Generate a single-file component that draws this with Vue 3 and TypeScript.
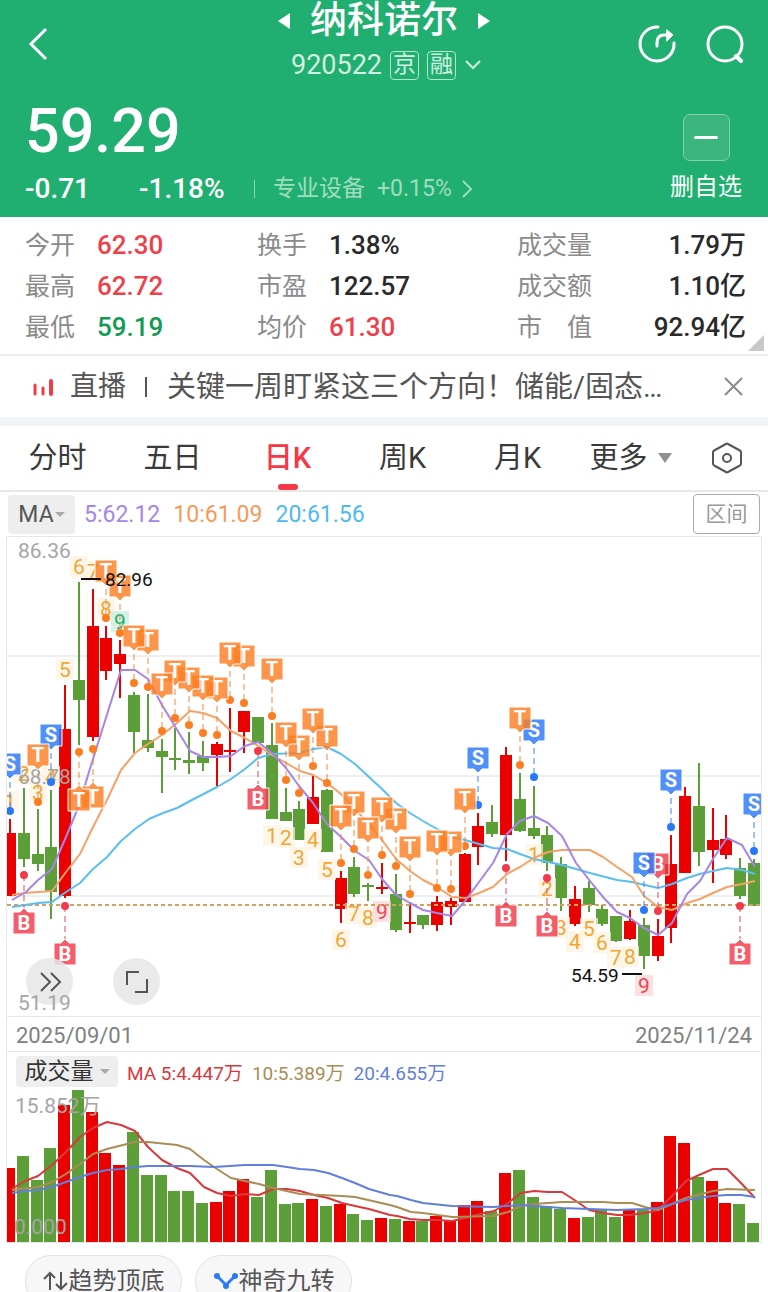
<script setup lang="ts">
type Kind = 'T' | 'S' | 'B'
interface Marker { kind: Kind; i: number; top: number; below?: boolean }

const xAt = (i: number): number => Math.round(10 + (744 * i) / 54)
const volX = (i: number): number => Math.round(9 + (744 * i) / 54)

// [rising, high, body top, body bottom, low]
const candles: [number, number, number, number, number][] = [
  [1, 819, 833, 896, 896], [0, 788, 833, 859, 867], [0, 809, 854, 864, 871], [0, 790, 847, 892, 919],
  [1, 685, 729, 896, 898], [0, 582, 680, 700, 745], [1, 589, 626, 737, 741], [1, 626, 638, 671, 680],
  [1, 640, 654, 664, 698], [0, 692, 695, 732, 753], [0, 694, 740, 748, 752], [0, 739, 751, 757, 793],
  [0, 728, 758, 760, 770], [0, 732, 760, 763, 774], [0, 741, 756, 763, 771], [1, 742, 744, 755, 786],
  [1, 708, 750, 752, 772], [1, 711, 711, 732, 753], [0, 717, 717, 743, 743], [0, 723, 745, 819, 819],
  [0, 788, 812, 821, 821], [0, 801, 809, 840, 840], [1, 775, 797, 824, 824], [0, 789, 790, 852, 852],
  [1, 871, 878, 909, 923], [0, 857, 867, 894, 897], [0, 883, 885, 887, 901], [1, 863, 887, 889, 894],
  [0, 874, 894, 930, 932], [1, 902, 922, 924, 933], [0, 915, 915, 925, 929], [1, 896, 902, 925, 931],
  [1, 898, 901, 907, 925], [1, 853, 854, 902, 902], [1, 813, 826, 847, 865], [0, 805, 822, 834, 837],
  [1, 747, 755, 835, 861], [0, 773, 799, 831, 832], [0, 786, 828, 836, 839], [0, 826, 835, 863, 871],
  [0, 857, 864, 898, 911], [1, 886, 899, 924, 926], [0, 881, 888, 905, 912], [0, 905, 909, 924, 926],
  [0, 916, 916, 941, 942], [1, 910, 921, 939, 940], [0, 918, 925, 956, 969], [1, 919, 936, 956, 961],
  [1, 835, 864, 928, 943], [1, 787, 796, 873, 873], [0, 763, 806, 852, 866], [1, 808, 840, 850, 883],
  [1, 815, 839, 855, 859], [0, 858, 868, 896, 899], [0, 859, 863, 906, 906],
]

const volumeTops: number[] = [
  1168, 1156, 1180, 1148, 1105, 1090, 1112, 1153, 1165, 1132, 1175, 1175, 1191, 1191, 1203, 1202, 1191, 1179,
  1197, 1170, 1204, 1203, 1199, 1206, 1204, 1214, 1220, 1218, 1219, 1221, 1221, 1216, 1221, 1205, 1201, 1211,
  1173, 1170, 1197, 1206, 1209, 1218, 1217, 1209, 1217, 1210, 1210, 1202, 1136, 1143, 1177, 1181, 1203, 1204, 1223,
]

const ma5 = '12,900 26,892 38,880 52,869 66,837 80,803 88,775 121,670 135,670 148,679 162,705 176,728 190,751 203,757 217,757 231,756 245,746 258,742 272,753 286,768 299,786 313,803 327,824 341,837 355,851 369,860 382,879 396,895 410,903 423,910 437,913 452,916 465,901 479,882 493,863 507,834 520,821 534,816 548,823 562,836 576,863 590,881 603,897 617,912 630,918 644,928 658,935 672,923 687,894 700,881 713,859 727,838 742,845 755,867'
const ma10 = '12,895 25,893 52,891 66,872 80,854 93,827 107,800 121,770 135,753 148,744 162,735 177,723 190,711 203,713 217,718 231,731 245,738 260,747 272,755 286,763 300,771 313,775 327,783 341,794 355,809 368,823 382,840 396,859 410,871 423,880 437,887 452,897 466,898 479,893 493,887 507,874 520,867 534,858 548,852 562,850 590,850 603,857 617,867 632,877 644,896 658,907 672,910 687,903 700,899 713,893 727,887 742,884 755,881'
const ma20 = '12,907 25,905 38,903 52,902 66,892 80,883 93,869 107,857 121,841 135,829 149,819 163,813 177,808 190,801 217,787 231,779 245,769 258,758 272,754 300,753 313,749 327,747 341,754 355,764 369,777 382,789 396,803 410,813 423,821 437,829 452,837 465,840 479,844 493,848 507,849 520,854 534,859 548,862 562,865 576,869 590,873 617,880 632,882 658,888 672,884 687,878 700,874 713,871 727,868 742,870 755,874'
const vol5 = '12,1189 25,1181 38,1176 52,1165 66,1152 80,1137 93,1128 107,1122 121,1125 135,1131 148,1147 162,1160 177,1168 190,1173 204,1187 217,1193 231,1196 245,1194 259,1195 273,1189 287,1189 300,1191 314,1195 328,1198 342,1203 355,1206 369,1209 390,1215 397,1216 410,1219 423,1220 438,1220 452,1221 465,1218 480,1214 494,1211 508,1203 521,1193 534,1191 548,1192 562,1192 576,1201 589,1210 603,1213 617,1215 630,1215 645,1213 658,1210 672,1196 686,1181 699,1175 713,1169 727,1169 741,1183 755,1198'
const vol10 = '12,1190 38,1187 52,1182 66,1174 80,1164 93,1154 107,1149 135,1142 148,1142 177,1145 190,1149 204,1160 217,1169 231,1178 259,1184 273,1188 300,1194 342,1196 355,1197 390,1205 397,1207 411,1212 423,1213 452,1217 493,1216 508,1212 521,1206 534,1204 562,1202 603,1202 617,1203 632,1203 645,1207 658,1210 672,1204 686,1198 713,1191 727,1189 755,1190'
const vol20 = '12,1193 25,1191 38,1190 52,1187 66,1182 80,1177 93,1173 107,1170 121,1169 135,1167 148,1166 190,1166 214,1167 245,1165 273,1165 287,1167 300,1169 314,1170 328,1173 342,1178 355,1183 369,1189 390,1195 397,1196 411,1200 423,1203 452,1206 493,1207 521,1205 562,1208 617,1210 645,1209 658,1208 672,1204 686,1200 713,1196 727,1195 741,1195 755,1197'

const above = (kind: Kind, pairs: [number, number][]): Marker[] => pairs.map(([i, top]) => ({ kind, i, top }))
const under = (kind: Kind, pairs: [number, number][]): Marker[] =>
  pairs.map(([i, top]) => ({ kind, i, top, below: true }))

// Later days are drawn first, so an earlier flag lies over its right-hand neighbour.
const markers: Marker[] = [
  ...above('T', [
    [2, 744], [7, 560], [8, 575], [9, 625], [10, 629], [11, 673], [12, 660], [13, 667], [14, 675], [15, 677],
    [16, 642], [17, 645], [19, 658], [20, 722], [21, 735], [22, 708], [23, 725], [24, 805], [25, 791], [26, 817],
    [27, 797], [28, 808], [29, 836], [31, 830], [32, 831], [33, 788], [37, 707],
  ]),
  ...above('S', [[0, 753], [3, 724], [34, 747], [38, 719], [46, 852], [48, 769], [54, 793]]),
  ...above('B', [[47, 853]]),
  ...under('T', [[5, 789], [6, 786]]),
  ...under('B', [[1, 912], [4, 943], [18, 788], [36, 905], [39, 915], [53, 943]]),
].sort((a, b) => b.i - a.i)

const dotY = (m: Marker): number => (m.below ? m.top - 37 : m.top + 58)
const flagPath = (m: Marker): string => {
  const x = xAt(m.i)
  const l = x - 11
  const r = x + 11
  const t = m.top
  const b = m.top + 22
  return m.below
    ? `M${l} ${t}H${x - 4}L${x} ${t - 4}L${x + 4} ${t}H${r}V${b}H${l}Z`
    : `M${l} ${t}H${r}V${b}H${x + 4}L${x} ${b + 4}L${x - 4} ${b}H${l}Z`
}

// [day index, digit, centre y]
const turns: [number, number, number][] = [
  [0, 1, 802], [1, 2, 774], [2, 3, 793], [3, 4, 777], [4, 5, 670], [5, 6, 567], [6, 7, 572], [7, 8, 609], [8, 9, 622],
  [19, 1, 836], [20, 2, 838], [21, 3, 858], [22, 4, 840], [23, 5, 870], [24, 6, 940], [25, 7, 914], [26, 8, 918],
  [27, 9, 912], [38, 1, 855], [39, 2, 889], [40, 3, 928], [41, 4, 942], [42, 5, 929], [43, 6, 943], [44, 7, 958],
  [45, 8, 957], [46, 9, 986],
]
const turnTone = (i: number, n: number): string => (n < 9 ? 'amber' : i === 8 ? 'mint' : 'rose')

const stats = [
  [['今开', '62.30', 'up'], ['最高', '62.72', 'up'], ['最低', '59.19', 'down']],
  [['换手', '1.38%', ''], ['市盈', '122.57', ''], ['均价', '61.30', 'up']],
  [['成交量', '1.79万', ''], ['成交额', '1.10亿', ''], ['市　值', '92.94亿', '']],
]
const tabs = ['分时', '五日', '日K', '周K', '月K']
</script>

<template>
  <main class="page">
    <header class="head">
      <nav class="nav">
        <button class="icon-btn" aria-label="返回">
          <svg width="28" height="40" viewBox="0 0 28 40"><path d="M23 5L8 20L23 35" fill="none" stroke="#fff" stroke-width="3" /></svg>
        </button>
        <div class="title">
          <div class="name-row">
            <button class="icon-btn" aria-label="上一只">
              <svg width="14" height="18" viewBox="0 0 14 18"><path d="M13 1V17L1 9Z" fill="#fff" /></svg>
            </button>
            <h1>纳科诺尔</h1>
            <button class="icon-btn" aria-label="下一只">
              <svg width="14" height="18" viewBox="0 0 14 18"><path d="M1 1V17L13 9Z" fill="#fff" /></svg>
            </button>
          </div>
          <button class="code-row">
            <span>920522</span><span class="badge">京</span><span class="badge">融</span>
            <svg width="18" height="12" viewBox="0 0 18 12"><path d="M2 2L9 9L16 2" fill="none" stroke="#d3f0e0" stroke-width="2" /></svg>
          </button>
        </div>
        <div class="actions">
          <button class="icon-btn" aria-label="分享">
            <svg width="40" height="40" viewBox="0 0 40 40" fill="none" stroke="#fff" stroke-width="3" stroke-linecap="round">
              <path d="M21 3A17 17 0 1 0 37 19" /><path d="M20 22V19Q20 11 27 11H31" /><path d="M30 6L36 11L30 17Z" fill="#fff" stroke-width="1" stroke-linejoin="round" />
            </svg>
          </button>
          <button class="icon-btn" aria-label="搜索">
            <svg width="40" height="40" viewBox="0 0 40 40" fill="none" stroke="#fff" stroke-width="3" stroke-linecap="round">
              <circle cx="20" cy="20" r="17" /><path d="M31 32L36 37" stroke-width="4" />
            </svg>
          </button>
        </div>
      </nav>
      <div class="quote">
        <div>
          <div class="price">59.29</div>
          <div class="change">
            <span class="diff">-0.71</span><span class="pct">-1.18%</span>
            <a href="#" class="sector">专业设备<span>+0.15%</span>
              <svg width="12" height="18" viewBox="0 0 12 18"><path d="M2 1L10 9L2 17" fill="none" stroke="currentColor" stroke-width="2" /></svg>
            </a>
          </div>
        </div>
        <button class="watch"><span class="minus"><i></i></span>删自选</button>
      </div>
    </header>

    <section class="stats">
      <dl v-for="(col, c) in stats" :key="c">
        <div v-for="[label, value, tone] in col" :key="label">
          <dt>{{ label }}</dt><dd :class="tone">{{ value }}</dd>
        </div>
      </dl>
      <svg class="corner" width="16" height="16" viewBox="0 0 16 16"><path d="M16 0V16H0Z" fill="#c8c8c8" /></svg>
    </section>

    <section class="ticker">
      <svg width="22" height="20" viewBox="0 0 22 20" stroke="#f03a46" stroke-linecap="round"><path d="M2 8V17M10 11V17" stroke-width="3" /><path d="M18 4V17" stroke-width="4" /></svg>
      <a href="#"><span>直播</span><i></i><span class="headline">关键一周盯紧这三个方向！储能/固态…</span></a>
      <button class="icon-btn" aria-label="关闭">
        <svg width="20" height="20" viewBox="0 0 20 20"><path d="M2 1L19 18M19 1L2 18" stroke="#8a8a8a" stroke-width="2" /></svg>
      </button>
    </section>

    <nav class="tabs">
      <button v-for="t in tabs" :key="t" :class="{ active: t === '日K' }">{{ t }}</button>
      <button class="more">更多<svg width="14" height="12" viewBox="0 0 14 12"><path d="M0 1H14L7 11Z" fill="#8f8f8f" /></svg></button>
      <button aria-label="设置">
        <svg width="32" height="32" viewBox="0 0 32 32" fill="none" stroke="#555" stroke-width="2">
          <path d="M15 2Q16 1 17 2L28 8Q30 9 30 10V22Q30 23 28 24L17 30Q16 31 15 30L4 24Q2 23 2 22V10Q2 9 4 8Z" stroke-linejoin="round" /><circle cx="16" cy="16" r="4" />
        </svg>
      </button>
    </nav>

    <div class="ma-row">
      <button class="picker">MA<svg width="10" height="7" viewBox="0 0 10 7"><path d="M0 1H10L5 6Z" fill="#aaa" /></svg></button>
      <span class="m5">5:62.12</span><span class="m10">10:61.09</span><span class="m20">20:61.56</span>
      <button class="range">区间</button>
    </div>

    <section class="frame">
      <div class="plot">
        <svg viewBox="7 537 754 479" role="img" aria-label="日K线">
          <path d="M7 656H761M7 776H761M7 896H761" stroke="#eeeff1" stroke-width="2" />
          <g v-for="(c, i) in candles" :key="i" :class="c[0] ? 'rise' : 'fall'">
            <rect :x="xAt(i) - 1" :y="c[1]" width="2" :height="c[4] - c[1]" />
            <rect :x="xAt(i) - 6" :y="c[2]" width="12" :height="c[3] - c[2]" />
          </g>
          <g v-for="[i, n, y] in turns" :key="'n' + i" :class="['turn', turnTone(i, n)]">
            <rect :x="xAt(i) - 9" :y="y - 11" width="18" height="21" />
            <text :x="xAt(i)" :y="y + 7">{{ n }}</text>
          </g>
          <path d="M7 905H761" stroke="#cfa35f" stroke-width="2" stroke-dasharray="4 3" />
          <g fill="none" stroke-width="2" stroke-linejoin="round">
            <polyline :points="ma20" stroke="#59bff2" />
            <polyline :points="ma10" stroke="#f5a267" />
            <polyline :points="ma5" stroke="#a585e8" />
          </g>
          <g class="axis">
            <text x="18" y="558">86.36</text><text x="18" y="784">68.78</text>
          </g>
          <g v-for="m in markers" :key="m.kind + m.i" :class="['flag', m.kind]">
            <path class="stem" :d="m.below ? `M${xAt(m.i)} ${dotY(m)}V${m.top - 4}` : `M${xAt(m.i)} ${m.top + 29}V${dotY(m)}`" />
            <circle :cx="xAt(m.i)" :cy="dotY(m)" r="4" />
            <path class="box" :d="flagPath(m)" />
            <text :x="xAt(m.i)" :y="m.top + 18">{{ m.kind }}</text>
          </g>
          <g class="extreme">
            <path d="M81 579H101M622 974H642" />
            <text x="105" y="586">82.96</text><text x="571" y="982">54.59</text>
          </g>
        </svg>
        <div class="tools">
          <button aria-label="快进">
            <svg width="24" height="24" viewBox="0 0 24 24"><path d="M3 3L12 12L3 21M13 3L22 12L13 21" /></svg>
          </button>
          <button aria-label="全屏">
            <svg width="24" height="24" viewBox="0 0 24 24"><path d="M2 15V2H14M22 9V22H10" /></svg>
          </button>
        </div>
        <span class="low-label">51.19</span>
      </div>
      <div class="dates"><time>2025/09/01</time><time>2025/11/24</time></div>
      <div class="vol-head">
        <button class="picker">成交量<svg width="10" height="7" viewBox="0 0 10 7"><path d="M0 1H10L5 6Z" fill="#aaa" /></svg></button>
        <span class="v5">MA 5:4.447万</span><span class="v10">10:5.389万</span><span class="v20">20:4.655万</span>
      </div>
      <svg viewBox="7 1089 754 153" role="img" aria-label="成交量">
        <rect v-for="(t, i) in volumeTops" :key="i" :class="candles[i][0] ? 'rise' : 'fall'" :x="volX(i) - 6" :y="t" width="12" :height="1242 - t" />
        <g fill="none" stroke-width="2" stroke-linejoin="round">
          <polyline :points="vol5" stroke="#d8393c" />
          <polyline :points="vol10" stroke="#ab8c55" />
          <polyline :points="vol20" stroke="#617fda" />
        </g>
        <g class="axis"><text x="15" y="1113">15.852万</text><text x="14" y="1234">0.000</text></g>
      </svg>
    </section>

    <div class="pills">
      <button>
        <svg width="26" height="24" viewBox="0 0 26 24" fill="none" stroke="#555" stroke-width="2"><path d="M7 21V4M1 10L7 4L12 9M18 3V20M24 14L18 20L13 15" /></svg>趋势顶底
      </button>
      <button>
        <svg width="26" height="24" viewBox="0 0 26 24"><path d="M4 7L13 16L22 7" fill="none" stroke="#2a7bf6" stroke-width="3" /><g fill="#2a7bf6"><circle cx="4" cy="7" r="3" /><circle cx="13" cy="17" r="3" /><circle cx="22" cy="7" r="3" /></g></svg>神奇九转
      </button>
    </div>
  </main>
</template>

<style>
body { margin: 0; background: #fff; }
</style>

<style scoped>
* { box-sizing: border-box; }
.page { height: 100vh; overflow: hidden; font-family: Roboto, "Noto Sans CJK SC", sans-serif; color: #2a2a2a; background: #fff; }
button { font: inherit; color: inherit; border: 0; padding: 0; background: none; cursor: pointer; }
a { color: inherit; text-decoration: none; }
svg { display: block; flex: none; }
.head { height: 217px; background: #20af70; color: #fff; }
.nav { display: grid; grid-template-columns: 1fr auto 1fr; align-items: center; height: 88px; padding: 0 23px; }
.nav > .icon-btn { justify-self: start; }
.title { display: flex; flex-direction: column; align-items: center; }
.name-row { display: flex; align-items: center; gap: 19px; height: 42px; }
h1 { margin: 0; font-size: 37px; line-height: 42px; font-weight: 500; }
.code-row { display: flex; align-items: center; gap: 8px; height: 46px; padding-left: 5px; font-size: 27px; color: #d3f0e0; }
.badge { width: 29px; height: 29px; line-height: 26px; font-size: 23px; border: 1px solid #b5e4cd; border-radius: 4px; }
.actions { display: flex; gap: 28px; justify-self: end; }
.quote { display: flex; justify-content: space-between; padding: 0 26px 0 25px; }
.price { height: 84px; line-height: 86px; font-size: 61px; font-weight: 500; }
.change { display: flex; align-items: center; height: 33px; font-size: 28px; font-weight: 500; }
.diff { width: 114px; }
.pct { width: 113px; }
.sector { display: flex; align-items: center; gap: 9px; font-size: 23px; line-height: 28px; font-weight: 400; color: #a0dcbf; }
.sector::before { content: ""; width: 1px; height: 18px; margin: 0 9px 0 2px; background: #8fd6b4; }
.sector span { margin-left: 3px; }
.watch { display: flex; flex-direction: column; align-items: center; gap: 7px; padding-top: 26px; font-size: 24px; line-height: 38px; }
.minus { display: grid; place-items: center; width: 47px; height: 47px; border: 1px solid #87d0ac; border-radius: 7px; background: #3ab57d; }
.minus i { width: 24px; height: 3px; border-radius: 2px; background: #fff; }

.stats { position: relative; display: grid; grid-template-columns: 232fr 260fr 229fr; height: 139px; padding: 8px 22px 0 25px; border-bottom: 2px solid #ececec; }
.stats dl { margin: 0; }
.stats dl div { display: flex; align-items: center; height: 41px; line-height: 41px; }
.stats dt { width: 72px; font-size: 25px; color: #8a8a8a; white-space: nowrap; }
.stats dd { margin: 0; font-size: 26px; font-weight: 500; }
.stats dl:last-of-type div { justify-content: space-between; }
.stats .up { color: #ef3f4a; }
.stats .down { color: #129a52; }
.corner { position: absolute; right: 4px; bottom: 3px; }

.ticker { display: flex; align-items: center; height: 61px; padding: 0 25px 0 33px; font-size: 28px; color: #555; }
.ticker a { display: flex; align-items: center; flex: 1; min-width: 0; margin-left: 15px; line-height: 40px; white-space: nowrap; }
.ticker i { width: 2px; height: 20px; margin: 0 20px 0 19px; background: #555; }
.headline { overflow: hidden; font-size: 29px; text-overflow: ellipsis; }

.tabs { display: grid; grid-template-columns: repeat(5, 115fr) 111fr 82fr; height: 75px; border-top: 9px solid #f2f4f8; border-bottom: 2px solid #e8e8e8; font-size: 29px; line-height: 44px; color: #3a3a3a; }
.tabs button { position: relative; display: flex; align-items: center; justify-content: center; }
.tabs .more { gap: 10px; }
.tabs .active { color: #f53845; font-weight: 500; }
.tabs .active::after { content: ""; position: absolute; bottom: 0; width: 20px; height: 6px; border-radius: 3px; background: #f53845; }

.ma-row { display: flex; align-items: center; height: 44px; padding: 0 8px; font-size: 23px; }
.picker { display: flex; align-items: center; justify-content: center; gap: 1px; background: #eee; border-radius: 4px; color: #555; }
.ma-row .picker { width: 67px; height: 39px; }
.ma-row span { margin-left: 13px; }
.ma-row .picker + span { margin-left: 9px; }
.m5 { color: #a585e8; }
.m10 { color: #f59a5a; }
.m20 { color: #4fbaf0; }
.range { margin-left: auto; width: 67px; height: 40px; border: 1px solid #aaa; border-radius: 4px; font-size: 21px; line-height: 34px; color: #999; }

.frame { margin: 0 6px; border: 1px solid #e6e6e6; }
.frame svg { width: 100%; }
.plot { position: relative; border-bottom: 1px solid #e6e6e6; }
.rise { fill: #eb0000; }
.fall { fill: #5c9e38; }
.axis { font-size: 21px; fill: #a5a5a5; }
.turn { font-size: 21px; text-anchor: middle; }
.turn rect { fill-opacity: 0.7; }
.amber rect { fill: #fdf3e0; }
.amber text { fill: #f2a534; }
.mint rect { fill: #c5ecdb; }
.mint text { fill: #20af70; }
.rose rect { fill: #fbd3d5; }
.rose text { fill: #ec4652; }
.flag .stem { fill: none; stroke-width: 1; stroke-dasharray: 6 4; }
.flag .box { stroke: #fff; stroke-width: 1; fill-opacity: 0.82; }
.flag text { font-size: 20px; font-weight: 700; text-anchor: middle; fill: #fff; }
.T { fill: #fd7e22; }
.T .stem { stroke: #f0873c; }
.S { fill: #2a78fa; }
.S .stem { stroke: #3d82f2; }
.B { fill: #f23a4b; }
.B .stem { stroke: #e04a58; }
.extreme { font-size: 19px; fill: #111; }
.extreme path { stroke: #111; stroke-width: 2; }
.tools { position: absolute; left: 19px; bottom: 11px; display: flex; gap: 40px; }
.tools button { display: grid; place-items: center; width: 47px; height: 47px; border-radius: 50%; background: rgba(230, 230, 230, 0.85); }
.tools svg { width: 24px; fill: none; stroke: #555; stroke-width: 2; }
.low-label { position: absolute; left: 11px; bottom: 0; font-size: 21px; line-height: 26px; color: #a5a5a5; }
.dates { display: flex; align-items: center; justify-content: space-between; height: 35px; padding: 2px 9px 0; border-bottom: 1px solid #e6e6e6; font-size: 22px; color: #808080; }
.vol-head { display: flex; align-items: center; gap: 9px; height: 37px; padding: 2px 9px 0; font-size: 19px; }
.vol-head .picker { width: 102px; height: 31px; gap: 6px; font-size: 23px; line-height: 31px; color: #333; }
.frame .picker svg { width: 10px; }
.v5 { color: #d8393c; }
.v10 { color: #ab8c55; }
.v20 { color: #617fda; }

.pills { display: flex; gap: 13px; padding: 12px 25px 0; }
.pills button { display: flex; align-items: center; justify-content: center; width: 157px; height: 52px; border: 1px solid #e2e2e2; border-radius: 26px; background: #f7f7f7; font-size: 24px; line-height: 48px; color: #555; }
</style>
